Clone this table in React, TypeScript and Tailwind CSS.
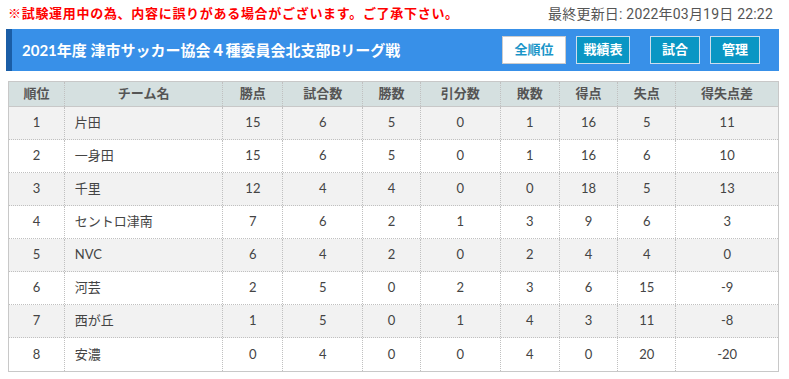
import React from "react";

const rows = [
  ["1", "片田", "15", "6", "5", "0", "1", "16", "5", "11"],
  ["2", "一身田", "15", "6", "5", "0", "1", "16", "6", "10"],
  ["3", "千里", "12", "4", "4", "0", "0", "18", "5", "13"],
  ["4", "セントロ津南", "7", "6", "2", "1", "3", "9", "6", "3"],
  ["5", "NVC", "6", "4", "2", "0", "2", "4", "4", "0"],
  ["6", "河芸", "2", "5", "0", "2", "3", "6", "15", "-9"],
  ["7", "西が丘", "1", "5", "0", "1", "4", "3", "11", "-8"],
  ["8", "安濃", "0", "4", "0", "0", "4", "0", "20", "-20"],
];

const heads = ["順位", "チーム名", "勝点", "試合数", "勝数", "引分数", "敗数", "得点", "失点", "得失点差"];
const widths = [56, 159, 60, 80, 58, 80, 59, 59, 58, 102];

export default function App() {
  return (
    <div
      className="w-[789px] h-[379px] bg-white overflow-hidden"
      style={{ fontFamily: 'Lato, "Noto Sans CJK JP", sans-serif' }}
    >
      <div className="flex items-center justify-between h-[28px] pl-[8px] pr-[16px]">
        <span className="text-[13px] font-bold text-[#ff0000] tracking-[0.7px]">
          ※試験運用中の為、内容に誤りがある場合がございます。ご了承下さい。
        </span>
        <span
          className="text-[14px] text-[#555] tracking-[0.2px]"
          style={{ fontFamily: 'Roboto, "Noto Sans CJK JP", sans-serif' }}
        >
          最終更新日: 2022年03月19日 22:22
        </span>
      </div>
      <div className="ml-[6px] mr-[10px] h-[42px] mt-[1px] flex items-center bg-[#3890e8] border-l-[6px] border-[#1a5da6] pl-[10px] pr-[19px]">
        <span className="text-[15px] font-bold text-white flex-1">
          2021年度 津市サッカー協会４種委員会北支部Bリーグ戦
        </span>
        <div className="flex gap-[10px] items-center">
          <span className="w-[64px] h-[28px] flex items-center justify-center bg-white border border-[#ccc] text-[#1a95c8] text-[13px] font-bold">全順位</span>
          <span className="w-[54px] h-[28px] flex items-center justify-center bg-[#0a96c4] border border-[#cde] text-white text-[13px] font-bold">戦績表</span>
          <span className="w-[50px] h-[28px] flex items-center justify-center bg-[#0a96c4] border border-[#cde] text-white text-[13px] font-bold ml-[10px]">試合</span>
          <span className="w-[50px] h-[28px] flex items-center justify-center bg-[#0a96c4] border border-[#cde] text-white text-[13px] font-bold">管理</span>
        </div>
      </div>
      <div className="ml-[8px] mt-[10px] w-[771px] border border-[#c8c8c8]">
        <div className="flex h-[25px] bg-[#d5e0e0] border-b border-[#c8c8c8]">
          {heads.map((h, i) => (
            <div
              key={i}
              style={{ width: widths[i] }}
              className={`flex items-center justify-center text-[13px] font-bold text-[#555] ${i < 9 ? "border-r border-dotted border-[#c0c0c0]" : ""}`}
            >
              {h}
            </div>
          ))}
        </div>
        {rows.map((r, ri) => (
          <div
            key={ri}
            className={`flex h-[33px] ${ri % 2 === 0 ? "bg-[#f2f2f2]" : "bg-white"} ${ri < 7 ? "border-b border-dotted border-[#c0c0c0]" : ""}`}
          >
            {r.map((c, i) => (
              <div
                key={i}
                style={{ width: widths[i] }}
                className={`flex items-center text-[13px] text-[#444] ${i === 1 ? "justify-start pl-[10px]" : "justify-center"} ${i < 9 ? "border-r border-dotted border-[#c0c0c0]" : ""}`}
              >
                {c}
              </div>
            ))}
          </div>
        ))}
      </div>
    </div>
  );
}
